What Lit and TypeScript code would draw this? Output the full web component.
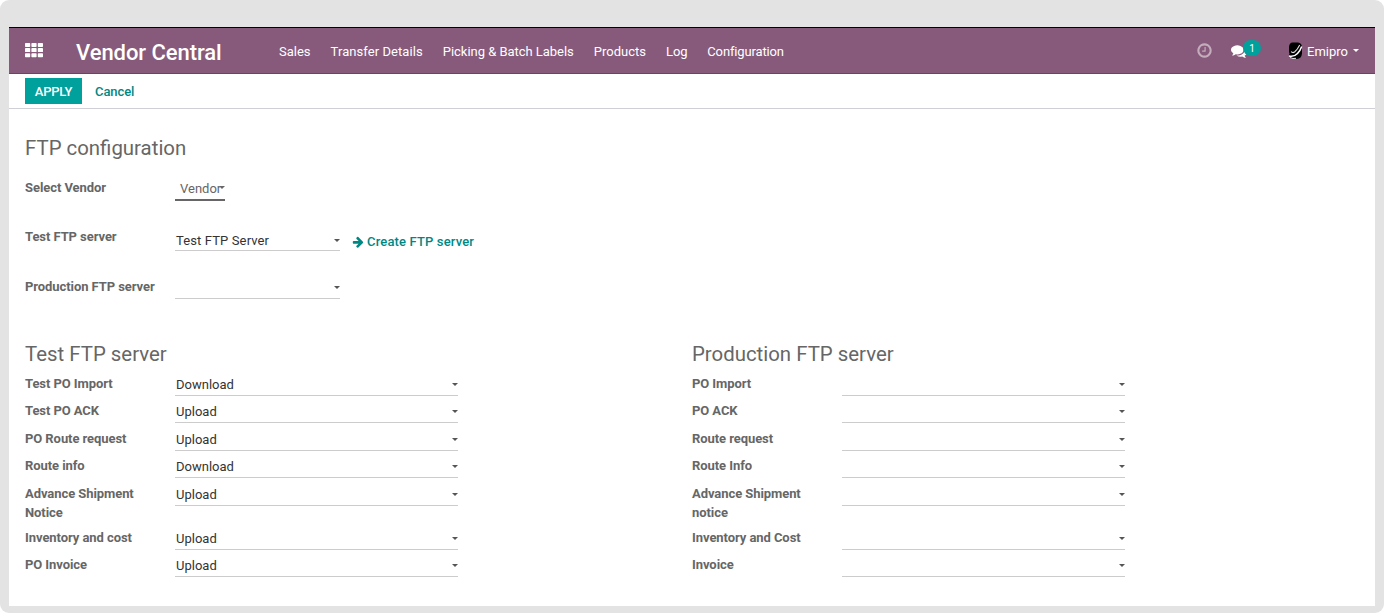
import { LitElement, html, css, svg } from "lit";
import { customElement, property } from "lit/decorators.js";

const CLOCK =
  "M1024 544v448q0 14-9 23t-23 9h-320q-14 0-23-9t-9-23v-64q0-14 9-23t23-9h224v-352q0-14 9-23t23-9h64q14 0 23 9t9 23zm416 352q0-148-73-273t-198-198-273-73-273 73-198 198-73 273 73 273 198 198 273 73 273-73 198-198 73-273zm224 0q0 209-103 385.5t-279.5 279.5-385.5 103-385.5-103-279.5-279.5-103-385.5 103-385.5 279.5-279.5 385.5-103 385.5 103 279.5 279.5 103 385.5z";
const COMMENTS =
  "M1408 768q0 139-94 257t-256.5 186.5-353.5 68.5q-86 0-176-16-124 88-278 128-36 9-86 16h-3q-11 0-20.5-8t-11.5-21q-1-3-1-6.5t.5-6.5 2-6l2.5-5 3.5-5.5 4-5 4.5-5 4-4.5q5-6 23-25t26-29.5 22.5-29 25-38.5 20.5-44q-124-72-195-177t-71-224q0-139 94-257t256.5-186.5 353.5-68.5 353.5 68.5 256.5 186.5 94 257zm384 256q0 120-71 224.5t-195 176.5q10 24 20.5 44t25 38.5 22.5 29 26 29.5 23 25q1 1 4 4.5t4.5 5 4 5 3.5 5.5l2.5 5 2 6 .5 6.5-1 6.5q-3 14-13 22t-22 7q-50-7-86-16-154-40-278-128-90 16-176 16-271 0-472-132 58 4 88 4 161 0 309-45t264-129q125-92 192-212t67-254q0-77-23-152 129 71 204 178t75 230z";
const ARROW =
  "M1600 960q0 54-37 91l-651 651q-39 37-91 37-51 0-90-37l-75-75q-38-38-38-91t38-91l293-293h-704q-52 0-84.5-37.5t-32.5-90.5v-128q0-53 32.5-90.5t84.5-37.5h704l-293-294q-38-36-38-90t38-90l75-75q38-38 90-38 53 0 91 38l651 651q37 35 37 90z";

const MENU = ["Sales", "Transfer Details", "Picking & Batch Labels", "Products", "Log", "Configuration"];

const TEST_ROWS: [string, string][] = [
  ["Test PO Import", "Download"],
  ["Test PO ACK", "Upload"],
  ["PO Route request", "Upload"],
  ["Route info", "Download"],
  ["Advance Shipment Notice", "Upload"],
  ["Inventory and cost", "Upload"],
  ["PO Invoice", "Upload"],
];

const PRODUCTION_ROWS: [string, string][] = [
  ["PO Import", ""],
  ["PO ACK", ""],
  ["Route request", ""],
  ["Route Info", ""],
  ["Advance Shipment notice", ""],
  ["Inventory and Cost", ""],
  ["Invoice", ""],
];

@customElement("select-field")
class SelectField extends LitElement {
  @property() value = "";

  static styles = css`
    :host {
      display: flex;
      box-sizing: border-box;
      height: 22px;
      align-items: center;
      justify-content: space-between;
      padding: 0 0 0 1px;
      border-bottom: 1px solid #ccc;
      color: #333;
      line-height: 20px;
    }
    span {
      padding-top: 1px;
    }
    svg {
      display: block;
      flex: none;
    }
  `;

  render() {
    return html`<span>${this.value}</span>
      <svg width="6" height="3" viewBox="0 0 6 3"><path d="M0 0h6l-3 3z" fill="#555" /></svg>`;
  }
}

@customElement("top-bar")
class TopBar extends LitElement {
  static styles = css`
    :host {
      display: flex;
      box-sizing: border-box;
      height: 47px;
      align-items: center;
      padding: 0 16px;
      border-top: 1px solid #000;
      border-bottom: 1px solid #68465f;
      background: #875a7b;
      color: #fff;
      line-height: 20px;
    }
    svg {
      display: block;
      flex: none;
    }
    .brand {
      margin: 4px 0 0 33px;
      width: 203px;
      font-size: 22px;
      font-weight: 500;
      letter-spacing: -0.06px;
      line-height: 26px;
      white-space: nowrap;
    }
    nav {
      display: flex;
      gap: 20px;
      flex: 1;
      padding-top: 2px;
    }
    nav span:nth-child(2) {
      letter-spacing: 0.07px;
    }
    nav span:nth-child(3) {
      letter-spacing: -0.03px;
    }
    nav span:last-child {
      margin-left: -0.4px;
      letter-spacing: -0.14px;
    }
    .clock {
      margin: -1px 19px 0 0;
      opacity: 0.5;
    }
    .chat {
      position: relative;
      width: 31px;
      margin-right: 26.5px;
    }
    .badge {
      position: absolute;
      left: 12.5px;
      top: -3px;
      width: 18px;
      height: 16px;
      border-radius: 8px;
      background: #00a09d;
      font-size: 10px;
      line-height: 17px;
      text-align: center;
    }
    .user {
      padding: 2px 5px 0 4px;
    }
  `;

  render() {
    const cells = [0, 1, 2].flatMap((r) =>
      [0, 1, 2].map((c) => svg`<rect x=${c * 6.4} y=${r * 5.1} width="5.2" height="4" rx="0.7" />`)
    );
    return html`
      <svg width="18" height="15" viewBox="0 0 18 15" fill="#fff">${cells}</svg>
      <div class="brand">Vendor Central</div>
      <nav>${MENU.map((m) => html`<span>${m}</span>`)}</nav>
      <svg class="clock" width="15" height="15" viewBox="96 96 1600 1600" fill="#fff"><path d=${CLOCK} /></svg>
      <div class="chat">
        <svg width="16" height="16" viewBox="0 0 1792 1792" fill="#fff"><path d=${COMMENTS} /></svg>
        <span class="badge">1</span>
      </div>
      <svg width="15" height="18" viewBox="0 0 15 18">
        <path d="M4 .5h6q4 .5 4 5v6q-.5 5-5 5.500h-3q-5-.5-5-4 1-1.500 0-3v-5q.3-4 3-4.500z" fill="#000" />
        <path d="M3.200 9.500Q4.500 11.500 6.800 9.800 9.300 7.800 11.700 3" fill="none" stroke="#ddd" stroke-width="1.100" />
        <path d="M1 14q5 1.200 8.500-2.500 3-3.200 4.200-7" fill="none" stroke="#fff" stroke-width="1.500" />
        <path d="M2 15.500q3 1.600 6 .8" fill="none" stroke="#fff" stroke-width=".9" />
      </svg>
      <span class="user">Emipro</span>
      <svg width="6" height="3" viewBox="0 0 6 3"><path d="M0 0h6l-3 3z" fill="#fff" /></svg>
    `;
  }
}

@customElement("app-root")
class AppRoot extends LitElement {
  static styles = css`
    :host {
      display: block;
      box-sizing: border-box;
      width: 1384px;
      height: 613px;
      padding: 27px 9px 7px;
      border-radius: 9px;
      background: #e3e3e3;
      font: 13px/19.5px Roboto, sans-serif;
      color: #666;
    }
    .window {
      height: 579px;
      background: #fff;
    }
    .actions {
      display: flex;
      box-sizing: border-box;
      height: 35px;
      align-items: center;
      gap: 13px;
      padding: 0 16px;
      border-bottom: 1px solid #cfcfd8;
      font-weight: 500;
      color: #008784;
    }
    .apply {
      width: 57px;
      height: 26px;
      background: #00a09d;
      color: #fff;
      line-height: 27px;
      letter-spacing: -0.25px;
      text-align: center;
    }
    .cancel {
      padding-top: 1px;
      letter-spacing: -0.08px;
    }
    main {
      padding: 25.8px 16px 0;
    }
    h2 {
      margin: 0;
      font-size: 20.4px;
      font-weight: 400;
      line-height: 26px;
    }
    .general {
      display: grid;
      grid-template-columns: 150px 165px auto;
      grid-template-rows: 49px 50px 63.7px;
      padding-top: 17.5px;
      justify-content: start;
    }
    .label {
      font-weight: 700;
      letter-spacing: -0.07px;
    }
    .vendor {
      display: flex;
      box-sizing: border-box;
      width: 50px;
      height: 23px;
      align-items: center;
      padding-left: 5px;
      border-bottom: 2px solid #666;
    }
    .vendor svg {
      flex: none;
      margin: -2px 0 0 -2px;
    }
    .server {
      box-sizing: border-box;
      margin-top: 2px;
      padding-top: 1px;
      letter-spacing: 0.12px;
    }
    .blank {
      margin-top: -0.5px;
    }
    .link {
      display: flex;
      height: 20px;
      align-items: center;
      gap: 2px;
      margin: 4.5px 0 0 13px;
      font-weight: 500;
      letter-spacing: 0.15px;
      color: #008784;
    }
    .link svg {
      margin-left: -1px;
      margin-right: 1px;
    }
    .groups {
      display: grid;
      grid-template-columns: 667px 667px;
    }
    .row {
      display: grid;
      grid-template-columns: 150px 283px;
      align-items: start;
      min-height: 22.5px;
      padding-bottom: 5px;
    }
    .rows {
      padding-top: 7px;
    }
    .row .label {
      width: 125px;
    }
  `;

  group(title: string, rows: [string, string][]) {
    return html`<section>
      <h2>${title}</h2>
      <div class="rows">
        ${rows.map(
          ([label, value]) => html`<div class="row">
            <span class="label">${label}</span>
            <select-field .value=${value}></select-field>
          </div>`
        )}
      </div>
    </section>`;
  }

  render() {
    return html`<div class="window">
      <top-bar></top-bar>
      <div class="actions"><span class="apply">APPLY</span><span class="cancel">Cancel</span></div>
      <main>
        <h2>FTP configuration</h2>
        <div class="general">
          <span class="label">Select Vendor</span>
          <div class="vendor">
            <span>Vendor</span>
            <svg width="6" height="3" viewBox="0 0 6 3"><path d="M0 0h6l-3 3z" fill="#666" /></svg>
          </div>
          <span></span>
          <span class="label">Test FTP server</span>
          <select-field class="server" .value=${"Test FTP Server"}></select-field>
          <span class="link">
            <svg width="12" height="12" viewBox="64 60 1600 1700" fill="#008784"><path d=${ARROW} /></svg>
            Create FTP server
          </span>
          <span class="label">Production FTP server</span>
          <select-field class="blank" .value=${""}></select-field>
          <span></span>
        </div>
        <div class="groups">
          ${this.group("Test FTP server", TEST_ROWS)} ${this.group("Production FTP server", PRODUCTION_ROWS)}
        </div>
      </main>
    </div>`;
  }
}
